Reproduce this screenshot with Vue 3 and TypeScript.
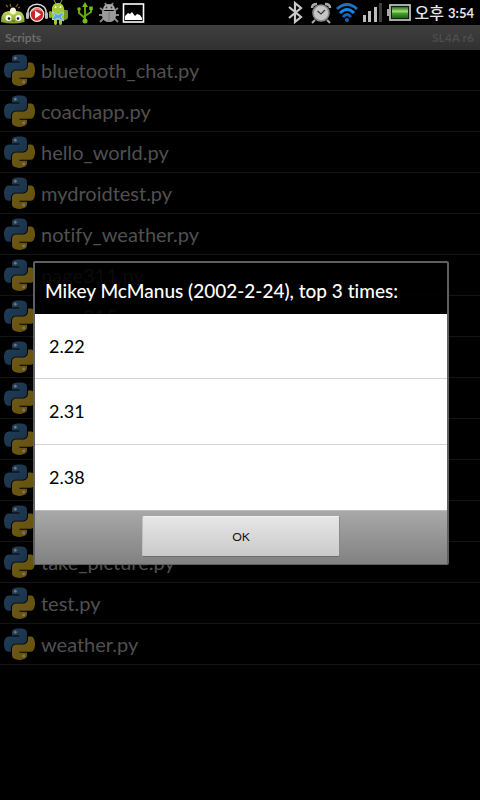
<script setup lang="ts">
import { ref } from 'vue'

interface Script {
  id: number
  name: string
}

const names: string[] = [
  'bluetooth_chat.py',
  'coachapp.py',
  'hello_world.py',
  'mydroidtest.py',
  'notify_weather.py',
  'page311.py',
  'page315.py',
  '',
  '',
  '',
  '',
  '',
  'take_picture.py',
  'test.py',
  'weather.py',
]
const scripts: Script[] = names.map((name, id) => ({ id, name }))
const times: string[] = ['2.22', '2.31', '2.38']
const open = ref(true)
</script>

<template>
  <div class="screen">
    <header class="status">
      <div class="group left">
        <svg class="ic" viewBox="0 0 24 25">
          <defs>
            <linearGradient id="lime" x1="0" y1="0" x2="0" y2="1">
              <stop offset="0" stop-color="#c3dc62" />
              <stop offset="1" stop-color="#7b9c26" />
            </linearGradient>
          </defs>
          <path d="M0 22Q0 14 4 12Q12 9 20 12Q24 15 23.500 22Q12 25 0 22Z" fill="url(#lime)" />
          <ellipse cx="12" cy="11" rx="3" ry="3.500" fill="#fbf9cf" />
          <path d="M5 5l2 2M9 4l1 3M17 4l-2 3M19 7l-2 1" stroke="#8b6218" stroke-width="1.200" />
          <circle cx="7.500" cy="18" r="3" fill="#fff" />
          <circle cx="17.500" cy="18" r="3" fill="#fff" />
          <circle cx="8" cy="18.500" r="1.300" fill="#111" />
          <circle cx="17" cy="18.500" r="1.300" fill="#111" />
          <path d="M11 21h3" stroke="#45580f" />
        </svg>
        <svg class="ic" viewBox="0 0 24 25">
          <path d="M3 14C1 1 23 1 21 14" fill="none" stroke="#ddd" stroke-width="1.500" />
          <circle cx="12" cy="14.500" r="6.800" fill="#c92727" stroke="#eee" stroke-width="1.200" />
          <path d="M7 11Q12 7 17 11" fill="none" stroke="#ed8b82" stroke-width="1.500" />
          <path d="M10 10.500l6 4-6 4z" fill="#fff" />
          <rect x="1" y="12" width="3" height="7" rx="1.500" fill="#bbb" />
          <rect x="20" y="12" width="3" height="7" rx="1.500" fill="#bbb" />
        </svg>
        <svg class="ic robot" viewBox="0 0 20 25">
          <path d="M5 0l2 4M13 0l-2 4" stroke="#8eb31c" />
          <path d="M3 9C3 1 15 1 15 9l1 2v9H3V11Z" fill="#a4c936" />
          <rect x="0" y="11" width="3" height="7" rx="1.500" fill="#8eb31c" />
          <path d="M15 10h3q1 0 1 2v5q0 3-4 3z" fill="#769b20" />
          <path d="M5 19h3v4q0 2-1.500 2T5 23zM10 19h3v4q0 2-1.500 2T10 23z" fill="#a4c936" />
          <circle cx="6.500" cy="7" r="1" fill="#fff" />
          <circle cx="11.500" cy="7" r="1" fill="#fff" />
          <path d="M3 12l3 1 3 2 3-2 3 0-3 4 3 4-3-1-3-2-3 2-3-1 3-4z" fill="#5aa2ed" stroke="#b5dcff" stroke-width=".7" />
        </svg>
        <svg class="ic usb" viewBox="0 0 24 25">
          <g fill="none" stroke="#5fa50b" stroke-width="2">
            <path d="M12 5v16M6 10v3l6 5M18 9v3l-6 4" />
          </g>
          <g fill="#76bd16">
            <path d="M12 2l3 5H9z" />
            <circle cx="12" cy="21" r="2.500" />
            <circle cx="6" cy="9" r="1.800" />
            <rect x="16.300" y="6.500" width="3.500" height="3.500" />
          </g>
        </svg>
        <svg class="ic" viewBox="0 0 24 25">
          <path d="M3 8l4 3M21 8l-4 3M2 15h20M3 22l4-4M21 22l-4-4M8 3l2 3M16 3l-2 3" stroke="#858585" stroke-width="2" />
          <path d="M6 10Q6 4 12 4t6 6z" fill="#aaa" />
          <path d="M5 11h14v5q-1 6-7 6t-7-6z" fill="#9a9a9a" />
          <path d="M12 12v9" stroke="#777" />
          <circle cx="9.500" cy="7.500" r=".9" fill="#333" />
          <circle cx="14.500" cy="7.500" r=".9" fill="#333" />
        </svg>
        <svg class="ic" viewBox="0 0 24 25">
          <rect x="2.500" y="4" width="20" height="18" fill="#000" stroke="#fff" stroke-width="1.600" />
          <path d="M4 20v-4l3-3 2 1 2-2 3 4 2-2 3 1 2 3v2z" fill="#fff" />
        </svg>
      </div>
      <div class="group right">
        <svg class="ic" viewBox="0 0 24 25">
          <path d="M6 7l12 10-6 5V3l6 5-12 10" fill="none" stroke="#c9c9c9" stroke-width="2.200" />
        </svg>
        <svg class="ic" viewBox="0 0 24 25">
          <path d="M6 20l-3 3M18 20l3 3" stroke="#aaa" stroke-width="2" />
          <path d="M3 8Q3 4 8 4M21 8q0-4-5-4" fill="none" stroke="#aaa" stroke-width="2.500" />
          <circle cx="12" cy="13" r="8" fill="#c5c5c5" stroke="#8a8a8a" stroke-width="1.600" />
          <path d="M8.500 11l3.500 3 4-4" fill="none" stroke="#333" stroke-width="1.200" />
        </svg>
        <svg class="ic" viewBox="0 0 24 25">
          <g fill="none" stroke-width="2.800">
            <path d="M2 9Q12 0 22 9" stroke="#1c72c4" />
            <path d="M5 13Q12 6 19 13" stroke="#1687ea" />
            <path d="M8 17Q12 12 16 17" stroke="#1465bd" />
          </g>
          <circle cx="12" cy="20" r="2" fill="#1263b4" />
        </svg>
        <svg class="ic" viewBox="0 0 24 25">
          <g fill="#bdbdbd">
            <rect x="2" y="15" width="3" height="7" />
            <rect x="7" y="11" width="3" height="11" />
            <rect x="13" y="7" width="3" height="15" />
          </g>
          <rect x="18" y="3" width="3" height="19" fill="#383d3d" />
        </svg>
        <svg class="ic" viewBox="0 0 24 25">
          <defs>
            <linearGradient id="charge" x1="0" y1="0" x2="0" y2="1">
              <stop offset="0" stop-color="#2c6c26" />
              <stop offset=".4" stop-color="#9fe06f" />
              <stop offset=".6" stop-color="#3f9c2e" />
              <stop offset="1" stop-color="#245f1d" />
            </linearGradient>
          </defs>
          <rect x="0" y="9" width="2" height="7" fill="#aaa" />
          <rect x="3" y="5" width="20" height="15" fill="#10200d" stroke="#bbb" stroke-width="1.800" />
          <rect x="5" y="7" width="16" height="11" fill="url(#charge)" />
        </svg>
        <div class="clock">
          <span class="period">오후</span>
          <span>3:54</span>
        </div>
      </div>
    </header>

    <div class="stage">
      <main class="app">
        <div class="titlebar">
          <span class="title">Scripts</span>
          <span class="version">SL4A r6</span>
        </div>
        <ul class="scripts">
          <li v-for="s in scripts" :key="s.id" class="script">
            <svg class="python" viewBox="0 0 111 111">
              <defs>
                <linearGradient id="pyBlue" x1="0" y1="0" x2="1" y2="1">
                  <stop offset="0" stop-color="#21405c" />
                  <stop offset="1" stop-color="#182f44" />
                </linearGradient>
                <linearGradient id="pyGold" x1="0" y1="0" x2="1" y2="1">
                  <stop offset="0" stop-color="#6c5a1c" />
                  <stop offset="1" stop-color="#665008" />
                </linearGradient>
              </defs>
              <path
                fill="url(#pyBlue)"
                d="M54.919 0C50.335.022 45.958.413 42.106 1.095 30.760 3.099 28.700 7.295 28.700 15.032v10.219h26.813v3.406h-36.875c-7.793 0-14.616 4.684-16.750 13.594-2.462 10.213-2.571 16.586 0 27.250 1.906 7.938 6.457 13.594 14.250 13.594h9.219v-12.250c0-8.850 7.657-16.656 16.750-16.656h26.781c7.455 0 13.406-6.138 13.406-13.625V15.032c0-7.266-6.130-12.725-13.406-13.937C64.284.328 59.502-.020 54.919 0z"
              />
              <path
                fill="url(#pyGold)"
                d="M85.638 28.657v11.906c0 9.231-7.826 17-16.750 17H42.106c-7.336 0-13.406 6.279-13.406 13.625v25.531c0 7.266 6.318 11.540 13.406 13.625 8.487 2.496 16.626 2.947 26.781 0 6.750-1.954 13.406-5.888 13.406-13.625V86.501H55.513v-3.406H95.700c7.792 0 10.696-5.435 13.406-13.594 2.799-8.399 2.680-16.476 0-27.250-1.926-7.757-5.604-13.594-13.406-13.594z"
              />
              <circle cx="40.500" cy="13.500" r="5" fill="#777" />
              <circle cx="70.500" cy="98.500" r="5" fill="#777" />
            </svg>
            <span class="name">{{ s.name }}</span>
          </li>
        </ul>
      </main>

      <div v-if="open" class="overlay">
        <section class="dialog" role="dialog" aria-labelledby="dialog-title">
          <h1 id="dialog-title" class="heading">Mikey McManus (2002-2-24), top 3 times:</h1>
          <ul class="times">
            <li v-for="t in times" :key="t" class="time">{{ t }}</li>
          </ul>
          <footer class="actions">
            <button type="button" class="ok" @click="open = false">OK</button>
          </footer>
        </section>
      </div>
    </div>
  </div>
</template>

<style>
body {
  margin: 0;
  background: #000;
}
</style>

<style scoped>
.screen {
  display: flex;
  flex-direction: column;
  min-height: 100vh;
  background: #000;
  font-family: Lato, "Noto Sans CJK KR", sans-serif;
  font-variant-ligatures: none;
}
.status {
  display: flex;
  justify-content: space-between;
  height: 25px;
  padding: 0 6px 0 1px;
  color: #e4e4e4;
}
.group {
  display: flex;
  align-items: center;
}
.right {
  gap: 2px;
}
.ic {
  width: 24px;
  height: 25px;
}
.robot {
  width: 20px;
}
.usb {
  margin-left: 4px;
}
.clock {
  display: flex;
  align-items: center;
  gap: 4px;
  margin-left: 2px;
  font-size: 13px;
  font-weight: 700;
  line-height: 24px;
  white-space: nowrap;
}
.period {
  font-size: 16px;
  font-weight: 500;
}
.stage {
  display: grid;
  flex: 1;
}
.app,
.overlay {
  grid-area: 1 / 1;
}
.titlebar {
  display: flex;
  justify-content: space-between;
  align-items: center;
  height: 25px;
  padding: 0 6px 0 5px;
  background: linear-gradient(#404040, #303030);
  font-size: 12px;
  font-weight: 700;
}
.title {
  color: #6b6b6b;
}
.version {
  color: #4c4c4c;
}
.scripts,
.times {
  margin: 0;
  padding: 0;
  list-style: none;
}
.script {
  display: flex;
  align-items: center;
  gap: 6px;
  box-sizing: border-box;
  height: 41px;
  padding: 0 4px;
  border-bottom: 1px solid #141414;
  color: #505050;
  font-size: 20px;
}
.python {
  flex: none;
  width: 31px;
  height: 32px;
}
.overlay {
  position: relative;
  display: flex;
  align-items: center;
  padding: 0 31px 0 33px;
}
.dialog {
  flex: 1;
  border: 2px solid #5f5f5f;
  border-bottom-width: 1px;
  border-radius: 2px;
}
.heading {
  margin: 0;
  padding: 4px 10px 0;
  background: rgba(0, 0, 0, 0.88);
  color: #fff;
  font-size: 19px;
  font-weight: 500;
  line-height: 47px;
  white-space: nowrap;
}
.time {
  box-sizing: border-box;
  height: 66px;
  padding: 0 14px;
  border-bottom: 1px solid #d4d4d4;
  background: #fff;
  color: #000;
  font-size: 18px;
  line-height: 65px;
}
.time:first-child {
  height: 65px;
}
.time:last-child {
  border-bottom-color: #bbb;
}
.actions {
  display: flex;
  justify-content: center;
  padding: 5px 0 7px;
  background: linear-gradient(#a8a8a8, #818181);
}
.ok {
  width: 48%;
  height: 41px;
  padding: 0;
  border: 1px solid;
  border-color: #f0f0f0 #8a8a8a #6c6c6c #c0c0c0;
  border-radius: 2px;
  background: linear-gradient(#e6e6e6, #cacaca);
  color: #111;
  font-family: inherit;
  font-size: 12px;
}
</style>
